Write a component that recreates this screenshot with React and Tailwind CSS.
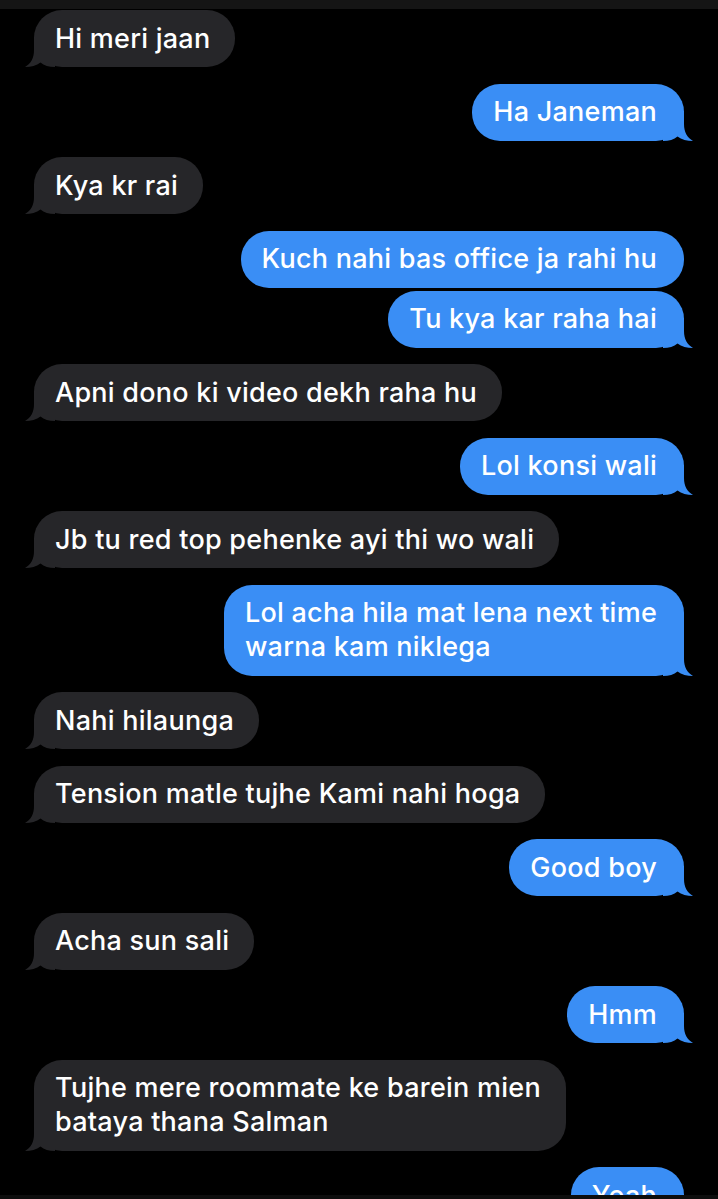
import React from 'react';

const messages = [
  { text: 'Hi meri jaan', me: false },
  { text: 'Ha Janeman', me: true },
  { text: 'Kya kr rai', me: false },
  { text: 'Kuch nahi bas office ja rahi hu', me: true, tail: false },
  { text: 'Tu kya kar raha hai', me: true, same: true },
  { text: 'Apni dono ki video dekh raha hu', me: false },
  { text: 'Lol konsi wali', me: true },
  { text: 'Jb tu red top pehenke ayi thi wo wali', me: false },
  { text: 'Lol acha hila mat lena next time\nwarna kam niklega', me: true },
  { text: 'Nahi hilaunga', me: false },
  { text: 'Tension matle tujhe Kami nahi hoga', me: false },
  { text: 'Good boy', me: true },
  { text: 'Acha sun sali', me: false },
  { text: 'Hmm', me: true },
  { text: 'Tujhe mere roommate ke barein mien\nbataya thana Salman', me: false },
  { text: 'Yeah', me: true },
];

function Tail({ me }) {
  const color = me ? '#3a8ef5' : '#262629';
  return (
    <svg
      width="30"
      height="30"
      viewBox="0 0 30 30"
      className={me ? 'absolute bottom-0 right-[-9px] -scale-x-100' : 'absolute bottom-0 left-[-9px]'}
    >
      <path d="M9 0 L9 13 C9 21 6 26.5 0 30 C6 30 11.5 28.5 15.5 25.5 C19 28.5 24 30 30 30 L30 0 Z" fill={color} />
    </svg>
  );
}

function Bubble({ msg }) {
  const hasTail = msg.tail !== false;
  return (
    <div
      className={`flex ${msg.me ? 'justify-end' : 'justify-start'} ${msg.same ? 'mt-[3px]' : 'mt-[16.5px]'}`}
    >
      <div
        className={`relative rounded-[28px] py-[11.5px] text-[27px] font-medium leading-[34px] tracking-[0.25px] text-white whitespace-pre ${
          msg.me ? 'bg-[#3a8ef5] pl-[21px] pr-[27px]' : 'bg-[#262629] pl-[21px] pr-[25px]'
        }`}
      >
        {hasTail && <Tail me={msg.me} />}
        <span className="relative">{msg.text}</span>
      </div>
    </div>
  );
}

export default function App() {
  return (
    <div
      className="relative h-[1199px] w-[718px] overflow-hidden bg-black"
      style={{ fontFamily: 'Inter, "Noto Sans", sans-serif' }}
    >
      <div className="h-[9px] bg-[#151515]" />
      <div className="px-[34px] -mt-[15.5px]">
        {messages.map((m, i) => (
          <Bubble key={i} msg={m} />
        ))}
      </div>
      <div className="absolute bottom-0 left-0 right-0 h-[4px] bg-[#0d0d0d]" />
    </div>
  );
}
